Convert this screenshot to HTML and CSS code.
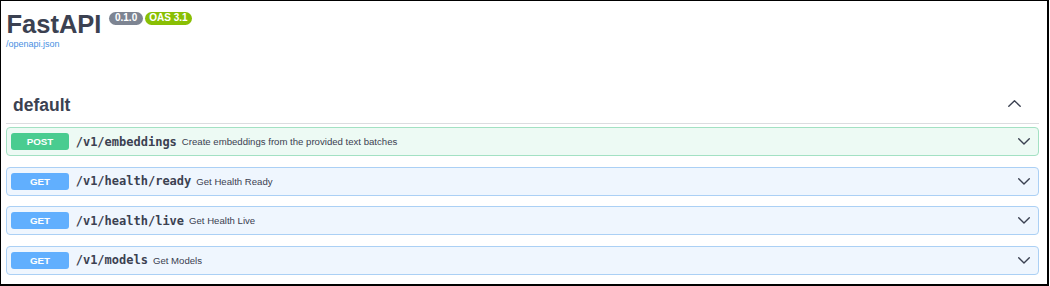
FILE: index.html
```html
<!DOCTYPE html>
<html lang="en">
<head>
<meta charset="utf-8">
<title>FastAPI - Swagger UI</title>
<link rel="stylesheet" href="styles.css">
</head>
<body>
<div class="frame">
  <div class="info">
    <h1 class="title"><span class="title-text">FastAPI</span><span class="badge badge-version">0.1.0</span><span class="badge badge-oas">OAS 3.1</span></h1>
    <a class="spec-link" href="#">/openapi.json</a>
  </div>

  <section class="tag-section">
    <div class="tag-header">
      <h3 class="tag-name">default</h3>
      <svg class="tag-arrow" width="13" height="7" viewBox="0 0 13 7"><polyline points="0.8,6.2 6.5,0.8 12.2,6.2" fill="none" stroke="#3b4151" stroke-width="1.4" stroke-linecap="round" stroke-linejoin="round"/></svg>
    </div>

    <div class="opblock opblock-post">
      <span class="method method-post">POST</span>
      <span class="path">/v1/embeddings</span>
      <span class="summary">Create embeddings from the provided text batches</span>
      <svg class="op-arrow" width="12" height="7" viewBox="0 0 12 7"><polyline points="0.7,0.8 6,6.1 11.3,0.8" fill="none" stroke="#3b4151" stroke-width="1.4" stroke-linecap="round" stroke-linejoin="round"/></svg>
    </div>

    <div class="opblock opblock-get">
      <span class="method method-get">GET</span>
      <span class="path">/v1/health/ready</span>
      <span class="summary">Get Health Ready</span>
      <svg class="op-arrow" width="12" height="7" viewBox="0 0 12 7"><polyline points="0.7,0.8 6,6.1 11.3,0.8" fill="none" stroke="#3b4151" stroke-width="1.4" stroke-linecap="round" stroke-linejoin="round"/></svg>
    </div>

    <div class="opblock opblock-get">
      <span class="method method-get">GET</span>
      <span class="path">/v1/health/live</span>
      <span class="summary">Get Health Live</span>
      <svg class="op-arrow" width="12" height="7" viewBox="0 0 12 7"><polyline points="0.7,0.8 6,6.1 11.3,0.8" fill="none" stroke="#3b4151" stroke-width="1.4" stroke-linecap="round" stroke-linejoin="round"/></svg>
    </div>

    <div class="opblock opblock-get">
      <span class="method method-get">GET</span>
      <span class="path">/v1/models</span>
      <span class="summary">Get Models</span>
      <svg class="op-arrow" width="12" height="7" viewBox="0 0 12 7"><polyline points="0.7,0.8 6,6.1 11.3,0.8" fill="none" stroke="#3b4151" stroke-width="1.4" stroke-linecap="round" stroke-linejoin="round"/></svg>
    </div>
  </section>
</div>
</body>
</html>
```

FILE: styles.css
```css
* {
  box-sizing: border-box;
}

html, body {
  margin: 0;
  padding: 0;
  background: #ffffff;
}

body {
  font-family: "Liberation Sans", Arial, sans-serif;
  color: #3b4151;
}

.frame {
  width: 1049px;
  height: 286px;
  border-style: solid;
  border-color: #000000;
  border-width: 1px 2px 2px 1px;
  padding: 9px 8px 0 5px;
  overflow: hidden;
}

.info {
  display: flex;
  flex-direction: column;
  align-items: flex-start;
}

.title {
  margin: 0;
  display: flex;
  align-items: flex-start;
  font-size: 25.5px;
  line-height: 29px;
  font-weight: 700;
  color: #3b4151;
}

.title-text {
  margin-left: 0.5px;
}

.badge {
  display: inline-flex;
  align-items: center;
  height: 12.5px;
  margin-top: 2px;
  padding: 0 5.5px;
  border-radius: 7px;
  font-size: 10px;
  line-height: 12px;
  font-weight: 700;
  color: #ffffff;
}

.badge-version {
  margin-left: 8px;
  background: #7d8492;
}

.badge-oas {
  margin-left: 2px;
  padding: 0 4.5px;
  background: #89bf04;
}

.spec-link {
  font-size: 9px;
  line-height: 11px;
  color: #4990e2;
  text-decoration: none;
}

.tag-section {
  margin-top: 45px;
}

.tag-header {
  display: flex;
  align-items: center;
  justify-content: space-between;
  padding: 0 18px 8px 7px;
  border-bottom: 1px solid #dcdde0;
  margin-bottom: 3px;
}

.tag-name {
  margin: 0;
  font-size: 17.5px;
  line-height: 20px;
  font-weight: 700;
  color: #3b4151;
}

.tag-arrow {
  display: block;
  margin-top: -3px;
}

.opblock {
  display: flex;
  align-items: center;
  height: 29px;
  padding: 0 8px 0 4px;
  margin-bottom: 10.5px;
  border: 1px solid;
  border-radius: 4px;
}

.opblock-post {
  background: #edfaf4;
  border-color: #a3e1c3;
}

.opblock-get {
  background: #eff6fe;
  border-color: #abd0f5;
}

.method {
  display: flex;
  align-items: center;
  justify-content: center;
  flex: 0 0 58px;
  height: 17px;
  border-radius: 3px;
  font-size: 9.8px;
  font-weight: 700;
  color: #ffffff;
}

.method-post {
  background: #49cc90;
}

.method-get {
  background: #61affe;
}

.path {
  padding: 0 5px 0 6.7px;
  font-family: "DejaVu Sans Mono", "Liberation Mono", monospace;
  font-size: 12px;
  font-weight: 700;
  color: #3b4151;
}

.summary {
  flex: 1;
  font-size: 9.6px;
  color: #3b4151;
}

.op-arrow {
  display: block;
}
```
